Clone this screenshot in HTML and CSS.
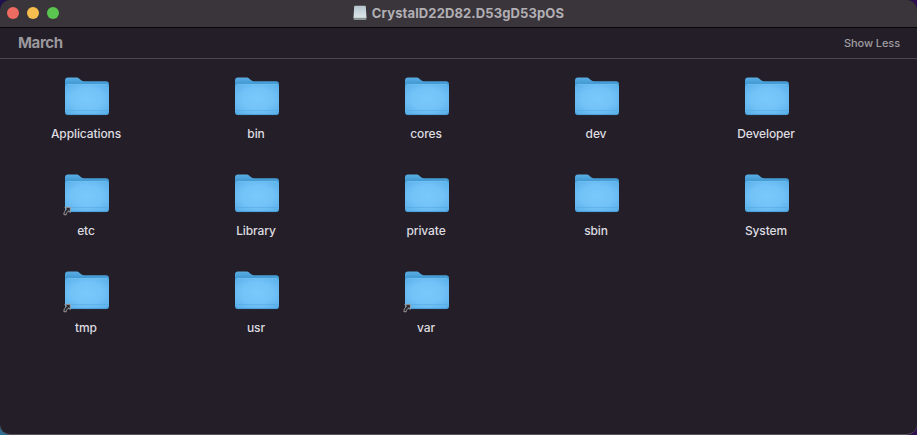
FILE: index.html
```
<!DOCTYPE html>
<html lang="en">
<head>
<meta charset="utf-8">
<title>CrystalD22D82.D53gD53pOS</title>
<link rel="stylesheet" href="styles.css">
</head>
<body>
<svg class="defs" width="0" height="0" aria-hidden="true">
  <defs>
    <linearGradient id="back" x1="0" y1="0" x2="0" y2="1">
      <stop offset="0" stop-color="#5aaee3"/><stop offset=".15" stop-color="#469dd6"/><stop offset="1" stop-color="#3f93cc"/>
    </linearGradient>
    <radialGradient id="front" cx=".5" cy=".48" r=".7">
      <stop offset="0" stop-color="#79c9fb"/><stop offset=".5" stop-color="#73c3f8"/><stop offset="1" stop-color="#58aee8"/>
    </radialGradient>
    <symbol id="folder" viewBox="0 0 50 42">
      <path fill="url(#back)" d="M4 5.500a3 3 0 0 1 3-3h8c1.600 0 2.500.5 3.600 1.400l1.600 1.300c.9.700 1.700 1 2.800 1H45a3 3 0 0 1 3 3V37H4z"/>
      <path fill="url(#front)" d="M4 11.800a2.500 2.500 0 0 1 2.500-2.500h39A2.500 2.500 0 0 1 48 11.800V37a3 3 0 0 1-3 3H7a3 3 0 0 1-3-3z"/>
      <path fill="none" stroke="#82cdf6" stroke-width=".5" d="M6 9.600h40"/>
      <path fill="none" stroke="#56aae2" stroke-width=".6" d="M4.500 35.500h43"/>
      <path fill="none" stroke="#4798d0" stroke-width=".8" d="M4.400 37a2.600 2.600 0 0 0 2.600 2.600h38a2.600 2.600 0 0 0 2.600-2.600"/>
    </symbol>
    <symbol id="alias" viewBox="0 0 10 10">
      <path fill="#2c282e" stroke="#b4b0b0" stroke-width=".8" stroke-linejoin="round" d="M2.300 1.300h5.500v5.200L6.200 5C4.700 5.900 4 7 3.500 9L1.300 8.500C1.500 6.200 2.400 4.600 4.100 3.200z"/>
    </symbol>
  </defs>
</svg>
<div class="desktop">
  <main class="window">
    <header class="titlebar">
      <div class="lights"><i class="light close"></i><i class="light minimize"></i><i class="light zoom"></i></div>
      <div class="title">
        <svg class="drive" viewBox="0 0 14 16">
          <defs><linearGradient id="disk" x1="0" y1="0" x2="0" y2="1"><stop offset="0" stop-color="#b5c5ce"/><stop offset="1" stop-color="#dfe6e9"/></linearGradient></defs>
          <path fill="url(#disk)" d="M1.800.8h10.400a.6.6 0 0 1 .6.5L13.500 13H.5L1.200 1.300a.6.6 0 0 1 .6-.5z"/>
          <path fill="#899294" d="M.5 12.800h13v1.300a.8.8 0 0 1-.8.8H1.300a.8.8 0 0 1-.8-.8z"/>
        </svg>
        <span class="name">CrystalD22D82.D53gD53pOS</span>
      </div>
    </header>
    <div class="group"><h1 class="month">March</h1><span class="less">Show Less</span></div>
    <section class="grid">
      <div class="item"><svg class="icon"><use href="#folder"/></svg><span class="label">Applications</span></div>
      <div class="item"><svg class="icon"><use href="#folder"/></svg><span class="label">bin</span></div>
      <div class="item"><svg class="icon"><use href="#folder"/></svg><span class="label">cores</span></div>
      <div class="item"><svg class="icon"><use href="#folder"/></svg><span class="label">dev</span></div>
      <div class="item"><svg class="icon"><use href="#folder"/></svg><span class="label">Developer</span></div>
      <div class="item"><svg class="icon"><use href="#folder"/><use href="#alias" x="1.500" y="34" width="10" height="10"/></svg><span class="label">etc</span></div>
      <div class="item"><svg class="icon"><use href="#folder"/></svg><span class="label">Library</span></div>
      <div class="item"><svg class="icon"><use href="#folder"/></svg><span class="label">private</span></div>
      <div class="item"><svg class="icon"><use href="#folder"/></svg><span class="label">sbin</span></div>
      <div class="item"><svg class="icon"><use href="#folder"/></svg><span class="label">System</span></div>
      <div class="item"><svg class="icon"><use href="#folder"/><use href="#alias" x="1.500" y="34" width="10" height="10"/></svg><span class="label">tmp</span></div>
      <div class="item"><svg class="icon"><use href="#folder"/></svg><span class="label">usr</span></div>
      <div class="item"><svg class="icon"><use href="#folder"/><use href="#alias" x="1.500" y="34" width="10" height="10"/></svg><span class="label">var</span></div>
    </section>
  </main>
</div>
</body>
</html>
```
FILE: styles.css
```
* { box-sizing: border-box; }
body { margin: 0; font-family: Inter, sans-serif; overflow: hidden; }
.defs { display: block; position: absolute; }
.desktop { height: 435px; background: linear-gradient(#20104d, #20104d) 0 0 / 20px 20px no-repeat, linear-gradient(#2d6d8e, #2d6d8e) 0 100% / 20px 20px no-repeat, #2f0d50; }
.window { height: 435px; display: flex; flex-direction: column; background: #231e27; border-radius: 10px; border-bottom: 1px solid #57525a; overflow: hidden; }
.titlebar { height: 28px; flex: none; display: grid; grid-template-columns: 100px 1fr 100px; align-items: center; background: #39353b; border-bottom: 1px solid #050406; padding-bottom: 1px; }
.lights { display: flex; gap: 8px; padding-left: 7px; }
.light { width: 12px; height: 12px; border-radius: 50%; }
.close { background: #ed6b60; }
.minimize { background: #f5be4f; }
.zoom { background: #5ac64f; }
.title { display: flex; justify-content: center; align-items: center; gap: 5px; }
.drive { width: 14px; height: 16px; }
.name { font-size: 13px; line-height: 16px; font-weight: 700; letter-spacing: .12px; color: #b2afb4; white-space: nowrap; }
.group { height: 31px; flex: none; display: flex; align-items: center; justify-content: space-between; padding: 0 17px 0 18px; border-bottom: 1px solid #4a454e; }
.month { margin: 0; font-size: 15px; line-height: 18px; font-weight: 700; letter-spacing: -.4px; color: #9b989d; }
.less { font-size: 11px; line-height: 14px; font-weight: 500; letter-spacing: -.08px; color: #a09da2; }
.grid { display: grid; grid-template-columns: repeat(5, 170px); grid-auto-rows: 97px; padding: 16px 0 0 1px; }
.item { display: flex; flex-direction: column; align-items: center; }
.icon { width: 50px; height: 42px; display: block; overflow: visible; }
.label { margin-top: 9px; font-size: 12px; line-height: 16px; font-weight: 500; letter-spacing: -.1px; color: #dedce0; }
```
